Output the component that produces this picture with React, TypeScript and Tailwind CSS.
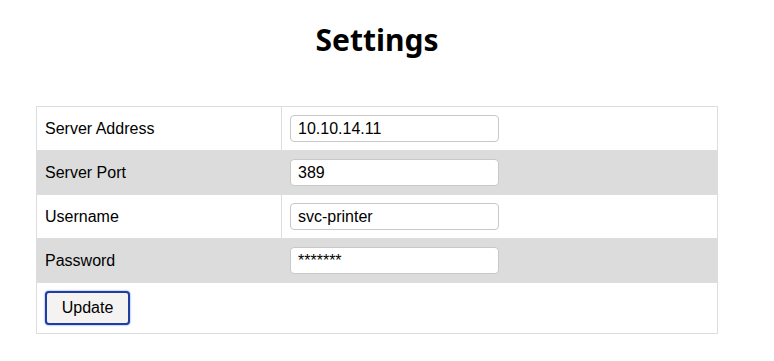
const rows = [
  { label: 'Server Address', value: '10.10.14.11', type: 'text' },
  { label: 'Server Port', value: '389', type: 'text' },
  { label: 'Username', value: 'svc-printer', type: 'text' },
  { label: 'Password', value: '*******', type: 'text' },
];

export default function App() {
  return (
    <div className="min-h-[361px] bg-white font-['Liberation_Sans',Arial,sans-serif] text-black">
      <div className="ml-[36px] w-[682px]">
        <h1 className="pt-[20px] text-center font-['Noto_Sans',sans-serif] text-[30px] leading-[40px] font-bold">
          Settings
        </h1>

        <table className="mt-[46px] w-full border-collapse border border-[#dddddd] text-[16px]">
          <tbody>
            {rows.map((row, idx) => (
              <tr key={row.label} className={idx % 2 === 1 ? 'bg-[#dcdcdc]' : 'bg-white'}>
                <td className="h-[44px] w-[245px] border border-[#dddddd] px-[8px] align-middle">
                  {row.label}
                </td>
                <td className="h-[44px] border border-[#dddddd] px-[8px] align-middle">
                  <input
                    type={row.type}
                    defaultValue={row.value}
                    className="block h-[27px] w-[209px] rounded-[4px] border border-[#c8c8c8] bg-white px-[7px] text-[16px] outline-none"
                  />
                </td>
              </tr>
            ))}
            <tr className="bg-white">
              <td colSpan={2} className="h-[51px] px-[8px] align-middle">
                <button className="h-[34px] w-[85px] rounded-[4px] border-2 border-[#1f3fa0] bg-[#f4f3f1] text-[16px] shadow-[0_0_2px_#5a7be0]">
                  Update
                </button>
              </td>
            </tr>
          </tbody>
        </table>
      </div>
    </div>
  );
}
